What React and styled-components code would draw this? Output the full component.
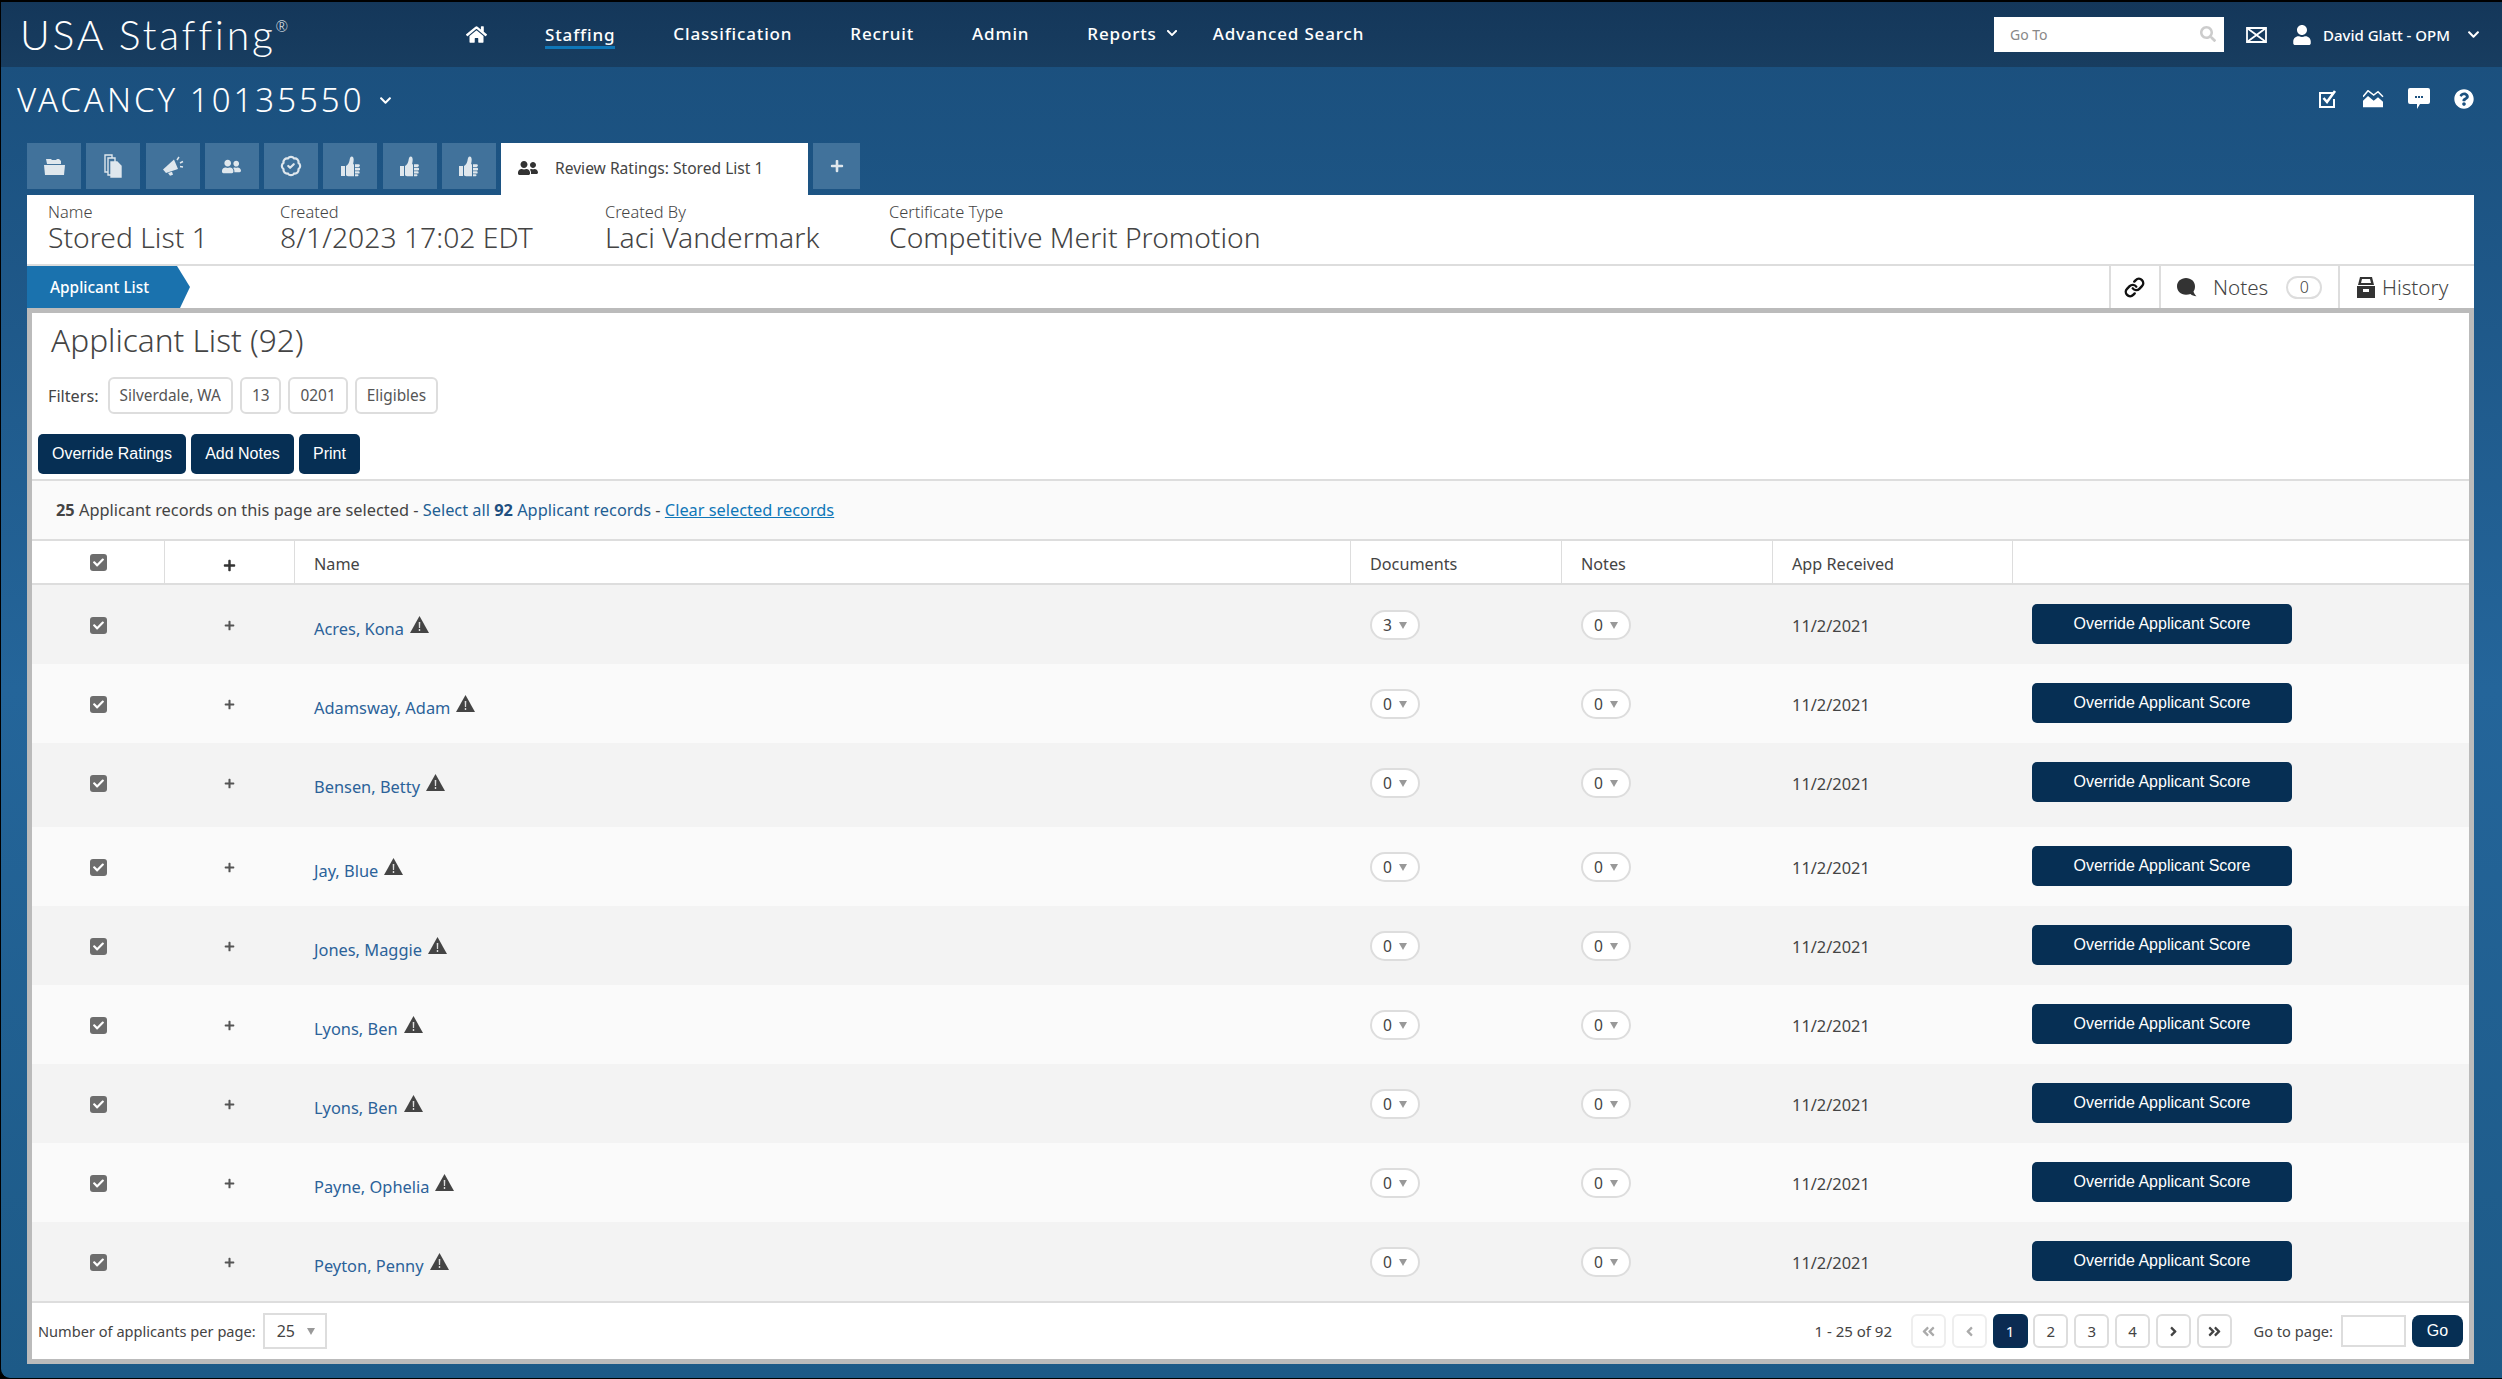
import styled, { createGlobalStyle } from "styled-components"
import {
  FaHome, FaChevronDown, FaSearch, FaUser, FaPlus, FaUserFriends,
  FaQuestionCircle, FaAngleDoubleLeft, FaAngleDoubleRight,
  FaAngleLeft, FaAngleRight, FaCheck,
} from "react-icons/fa"
import { BadgeCheck, Link } from "lucide-react"

const UI = `"Noto Sans", "Open Sans", sans-serif`
const NAVY = "#062f54"

const GlobalStyle = createGlobalStyle`
  html, body {
    margin: 0;
    background: #000;
  }
  * {
    box-sizing: border-box;
  }
  body {
    font-family: ${UI};
    color: #444;
  }
`

const Page = styled.div`
  width: 2502px;
  height: 1379px;
  display: flex;
  flex-direction: column;
  overflow: hidden;
  border-top: 2px solid #000;
  border-left: 1px solid #000;
  border-bottom: 1px solid #000;
  border-bottom-left-radius: 10px;
  background: linear-gradient(#1b507e 60px, #24659a 50%, #1d5a87);
`

const TopBar = styled.header`
  height: 65px;
  flex: none;
  display: flex;
  align-items: center;
  padding: 0 22px 0 19px;
  color: #fff;
  background: linear-gradient(#14375a, #183d60);
`

const Logo = styled.div`
  width: 446px;
  font-family: Lato, ${UI};
  font-weight: 300;
  font-size: 41px;
  letter-spacing: 2.7px;
  line-height: 1;
  sup {
    font-size: 15px;
    vertical-align: 18px;
    line-height: 0;
    letter-spacing: 0;
  }
`

const Nav = styled.nav`
  display: flex;
  align-items: center;
  gap: 58px;
`

const NavLink = styled.a`
  display: flex;
  align-items: center;
  gap: 9px;
  height: 26px;
  font-size: 17px;
  font-weight: 500;
  letter-spacing: 0.85px;
  border-bottom: 3px solid ${(p) => (p.$active ? "#0f77b8" : "transparent")};
  margin-right: ${(p) => (p.$tight ? "-23px" : "0")};
  margin-top: ${(p) => (p.$active ? "2px" : "0")};
`

const TopRight = styled.div`
  margin-left: auto;
  display: flex;
  align-items: center;
`

const GoTo = styled.div`
  width: 230px;
  height: 35px;
  display: flex;
  align-items: center;
  justify-content: space-between;
  padding: 0 8px 0 16px;
  margin-top: -1px;
  background: #fff;
  color: #888;
  font-size: 14px;
`

const TopIcon = styled.span`
  display: flex;
  margin-left: ${(p) => p.$left}px;
`

const UserName = styled.span`
  font-size: 15px;
  font-weight: 500;
  margin: 0 17px 0 11px;
`

const VacancyBar = styled.div`
  height: 76px;
  flex: none;
  display: flex;
  align-items: flex-start;
  justify-content: space-between;
  padding: 13px 28px 0 16px;
  color: #fff;
`

const VacancyTitle = styled.h1`
  margin: 0;
  display: flex;
  align-items: center;
  gap: 14px;
  font-size: 33px;
  font-weight: 300;
  line-height: 40px;
  letter-spacing: 3px;
`

const IconRow = styled.div`
  display: flex;
  align-items: center;
  gap: 24px;
  padding-top: 8px;
`

const Tabs = styled.div`
  height: 52px;
  flex: none;
  display: flex;
  align-items: flex-start;
  gap: 5.25px;
  padding-left: 26px;
`

const Tab = styled.div`
  width: ${(p) => p.$width || 54}px;
  height: 46px;
  display: flex;
  align-items: center;
  justify-content: center;
  background: #41729b;
  color: #dfe7ed;
  font-size: 19px;
`

const ActiveTab = styled.div`
  width: 307px;
  height: 52px;
  display: flex;
  align-items: center;
  gap: 17px;
  padding: 0 0 2px 17px;
  background: #fff;
  color: #444;
  font-size: 15.6px;
`

const Content = styled.div`
  flex: 1;
  min-height: 0;
  display: flex;
  flex-direction: column;
  margin: 0 28px 14px 26px;
`

const InfoRow = styled.div`
  height: 69px;
  flex: none;
  display: grid;
  grid-template-columns: 232px 325px 284px 1fr;
  padding: 8px 0 0 21px;
  background: #fff;
`

const InfoLabel = styled.div`
  font-size: 16.4px;
  font-weight: 300;
  line-height: 18px;
`

const InfoValue = styled.div`
  margin-top: -1px;
  font-size: 28.3px;
  font-weight: 300;
  line-height: 34px;
  color: #444;
`

const SubBar = styled.div`
  height: 44px;
  flex: none;
  display: flex;
  justify-content: space-between;
  border-top: 2px solid #ddd;
  background: #fff;
`

const Crumb = styled.div`
  width: 163px;
  display: flex;
  align-items: center;
  padding-left: 23px;
  background: #1a72ae;
  color: #fff;
  font-size: 15.4px;
  font-weight: 500;
  clip-path: polygon(0 0, 150px 0, 100% 50%, 153px 100%, 0 100%);
`

const SubActions = styled.div`
  display: flex;
`

const SubAction = styled.div`
  width: ${(p) => p.$width}px;
  display: flex;
  align-items: center;
  gap: ${(p) => p.$gap || 0}px;
  padding-left: ${(p) => p.$pad || 0}px;
  border-left: 2px solid #ddd;
  font-size: 20.6px;
  font-weight: 300;
  color: #444;
`

const CountPill = styled.span`
  width: 36px;
  height: 23px;
  display: flex;
  align-items: center;
  justify-content: center;
  margin-left: 2px;
  border: 2px solid #ddd;
  border-radius: 12px;
  font-size: 16px;
`

const Panel = styled.main`
  flex: 1;
  min-height: 0;
  display: flex;
  flex-direction: column;
  border: 5px solid #bbb;
  background: #fff;
`

const PanelHead = styled.div`
  flex: none;
  padding: 0 0 5px 6px;
`

const Heading = styled.h2`
  margin: 0 0 10px 13px;
  font-size: 31.6px;
  font-weight: 300;
  line-height: 54px;
  color: #444;
`

const FilterRow = styled.div`
  height: 37px;
  display: flex;
  align-items: center;
  gap: 7px;
  margin-left: 10px;
  font-size: 16.2px;
`

const FilterLabel = styled.span`
  margin-right: 2px;
`

const Chip = styled.span`
  height: 37px;
  padding: 0 10px;
  display: flex;
  align-items: center;
  border: 2px solid #ddd;
  border-radius: 6px;
  font-size: 15.4px;
  color: #555;
`

const ActionRow = styled.div`
  display: flex;
  gap: 5px;
  margin-top: 20px;
`

const DarkButton = styled.button`
  width: ${(p) => p.$width}px;
  height: ${(p) => p.$height || 40}px;
  padding: 0;
  border: 0;
  border-radius: ${(p) => p.$radius || 5}px;
  background: ${NAVY};
  color: #fff;
  font-family: "Liberation Sans", Arial, sans-serif;
  font-size: 16px;
`

const SelectionBar = styled.div`
  height: 62px;
  flex: none;
  display: flex;
  align-items: center;
  padding-left: 24px;
  border-top: 2px solid #ddd;
  border-bottom: 2px solid #ddd;
  background: #fafafa;
  font-size: 16.35px;
  white-space: pre;
  strong {
    font-weight: 700;
  }
`

const Blue = styled.span`
  color: #1f5f94;
`

const BlueStrong = styled.strong`
  color: #1f4f80;
`

const ClearLink = styled.a`
  color: #0f77b8;
  text-decoration: underline;
`

const COLUMNS = "132px 130px 1056px 211px 211px 240px 1fr"

const HeaderRow = styled.div`
  height: 44px;
  flex: none;
  display: grid;
  grid-template-columns: ${COLUMNS};
  border-bottom: 2px solid #ddd;
  font-size: 16.2px;
`

const HeaderCell = styled.div`
  display: flex;
  align-items: center;
  justify-content: ${(p) => (p.$center ? "center" : "flex-start")};
  padding: ${(p) => (p.$center ? "0" : "4px 0 0 19px")};
  border-left: ${(p) => (p.$first ? "0" : "1px solid #ddd")};
`

const HeaderPlus = styled(FaPlus)`
  margin-top: 6px;
  font-size: 13px;
  color: #333;
`

const Row = styled.div`
  height: ${(p) => p.$height}px;
  flex: none;
  display: grid;
  grid-template-columns: ${COLUMNS};
  align-items: start;
  padding-top: 19px;
  background: ${(p) => (p.$odd ? "#f3f3f3" : "#fafafa")};
  font-size: 16.4px;
`

const Cell = styled.div`
  height: 40px;
  display: flex;
  align-items: center;
  justify-content: ${(p) => (p.$center ? "center" : "flex-start")};
  padding: 2px 0 0 ${(p) => (p.$center ? 0 : 20)}px;
`

const ButtonCell = styled(Cell)`
  padding: 0 0 0 20px;
`

const Check = styled.span`
  width: 17px;
  height: 17px;
  display: flex;
  align-items: center;
  justify-content: center;
  border-radius: 3px;
  background: #6d6d6d;
  color: #fff;
  font-size: 11px;
`

const ApplicantName = styled.a`
  padding-top: 6px;
  color: #2b6299;
`

const WarnMark = styled.svg`
  margin: 0 0 2px 6px;
`

const CountSelect = styled.span`
  width: 50px;
  height: 30px;
  display: flex;
  align-items: center;
  justify-content: center;
  gap: 7px;
  border: 2px solid #ddd;
  border-radius: 15px;
  background: #fff;
  font-size: 15.6px;
`

const Caret = styled.span`
  width: 0;
  height: 0;
  border-left: 4px solid transparent;
  border-right: 4px solid transparent;
  border-top: 7px solid #999;
`

const Footer = styled.footer`
  flex: 1;
  display: flex;
  align-items: center;
  justify-content: space-between;
  padding: 0 6px;
  border-top: 2px solid #ddd;
  font-size: 14.6px;
`

const FooterGroup = styled.div`
  display: flex;
  align-items: center;
`

const RangeText = styled.span`
  font-size: 15px;
`

const PerPage = styled.span`
  width: 64px;
  height: 36px;
  display: flex;
  align-items: center;
  justify-content: space-between;
  margin-left: 7px;
  padding: 0 10px 0 12px;
  border: 2px solid #ddd;
  font-size: 16px;
`

const Pager = styled.div`
  display: flex;
  gap: 5.8px;
  margin: 0 22px 0 19px;
`

const PageButton = styled.span`
  width: 35px;
  height: 34px;
  display: flex;
  align-items: center;
  justify-content: center;
  border: 2px solid ${(p) => (p.$current ? NAVY : p.$disabled ? "#eee" : "#ddd")};
  border-radius: 6px;
  background: ${(p) => (p.$current ? "#0b2b52" : "#fff")};
  color: ${(p) => (p.$current ? "#fff" : p.$disabled ? "#aaa" : "#444")};
  font-size: 15px;
`

const PageInput = styled.span`
  width: 65px;
  height: 32px;
  margin: 0 6px 0 8px;
  border: 2px solid #ddd;
`

const FolderIcon = () => (
  <svg width="21" height="18" viewBox="0 0 21 18" fill="currentColor">
    <path d="M2 2h5l1 1h4l1-1h2l2 2v3H3z" />
    <path d="M0 8h21l-1 10H1z" />
  </svg>
)

const FilesIcon = () => (
  <svg width="20" height="24" viewBox="0 0 20 24" fill="none" stroke="currentColor" strokeWidth="1.4">
    <path d="M2 1h7v17H2z" />
    <path d="M5 4h7v17H5z" fill="#41729b" />
    <path d="M8 8h6l4 4v11H8z" fill="currentColor" />
  </svg>
)

const HornIcon = () => (
  <svg width="22" height="22" viewBox="0 0 22 22" fill="currentColor">
    <path d="M1 14.500L12 4.500l4 9.500-12 4z" />
    <path d="M6 18l4-1.300 1 3-3 1z" />
    <path d="M15 5l2-3M18 8l3-1.500M18 11.500l3 .5" stroke="currentColor" strokeWidth="1.500" fill="none" />
  </svg>
)

const ThumbIcon = () => (
  <svg width="19" height="21" viewBox="0 0 19 21" fill="currentColor">
    <path d="M0 10h4v10H0z" />
    <path d="M5 10c2-1 3-3 3.500-5.500C8.800 3 9 .5 10.500.5c1.800 0 2.500 2 2.100 4.500l-.5 3.200H13v12H7c-1 0-2-.5-2-1.200z" />
    <path d="M14 8.200h3.500a1.300 1.300 0 0 1 0 2.800H14zM14 11.800h4a1.300 1.300 0 0 1 0 2.600h-4zM14 15.200h3.500a1.200 1.200 0 0 1 0 2.400H14zM14 18.200h2.500a1 1 0 0 1 0 2H14z" />
  </svg>
)

const MailIcon = () => (
  <svg width="21" height="16" viewBox="0 0 21 16" fill="none" stroke="#fff" strokeWidth="1.8">
    <path d="M1 1h19v14H1z" />
    <path d="M1 1l19 14M20 1L1 15" />
  </svg>
)

const TaskIcon = () => (
  <svg width="21" height="18" viewBox="0 0 21 18" fill="none" stroke="#fff" strokeWidth="2">
    <path d="M16 9v8H2V3h13" />
    <path d="M5.500 8l3.500 4 8-11" strokeWidth="2.600" />
  </svg>
)

const OpenMailIcon = () => (
  <svg width="21" height="18" viewBox="0 0 21 18" fill="#fff">
    <path d="M0 10.700L5 6l5.700 4.700L15 7.300l5 4.400v5.600H0z" />
    <path d="M0 6.700L5 .7 10.700 5 15 1.700l5 5" fill="none" stroke="#fff" strokeWidth="1.500" />
  </svg>
)

const ChatIcon = () => (
  <svg width="22" height="21" viewBox="0 0 22 21">
    <path d="M2 0h18a2 2 0 0 1 2 2v12a2 2 0 0 1-2 2h-8l-3 5v-5H2a2 2 0 0 1-2-2V2a2 2 0 0 1 2-2z" fill="#fff" />
    <path d="M7 8h2v2H7zM10 8h2v2h-2zM13 8h2v2h-2z" fill="#1c5280" />
  </svg>
)

const BubbleIcon = () => (
  <svg width="21" height="21" viewBox="0 0 21 21" fill="#333">
    <path d="M10 1c5 0 9 3.600 9 8.200 0 2.300-.7 4.300-1.500 5.300.4 1.800 1.600 3.500 3 4.700-2.600 0-4.600-.8-6-2.100-1.300.4-2.900.6-4.500.6C4.500 17.700 1 14 1 9.200 1 4.600 5 1 10 1z" />
  </svg>
)

const DrawerIcon = () => (
  <svg width="18" height="23" viewBox="0 0 18 23" fill="#333">
    <path d="M3 1h12l2 8H1zM5 3l-1 4h10l-1-4z" fillRule="evenodd" />
    <path d="M0 10h18v12H0zM6 13v3h6v-3z" fillRule="evenodd" />
  </svg>
)

const WarnIcon = () => (
  <WarnMark width="19" height="17" viewBox="0 0 19 17">
    <path d="M9.500 0L19 17H0z" fill="#444" />
    <path d="M8.700 6h1.600l-.2 6H8.900zM8.800 13h1.400v2H8.800z" fill="#ddd" />
  </WarnMark>
)

const tabIcons = [
  <FolderIcon />,
  <FilesIcon />,
  <HornIcon />,
  <FaUserFriends />,
  <BadgeCheck size={22} strokeWidth={2.4} />,
  <ThumbIcon />,
  <ThumbIcon />,
  <ThumbIcon />,
]

const applicants = [
  { name: "Acres, Kona", docs: 3, height: 79 },
  { name: "Adamsway, Adam", docs: 0, height: 79 },
  { name: "Bensen, Betty", docs: 0, height: 84 },
  { name: "Jay, Blue", docs: 0, height: 79 },
  { name: "Jones, Maggie", docs: 0, height: 79 },
  { name: "Lyons, Ben", docs: 0, height: 79 },
  { name: "Lyons, Ben", docs: 0, height: 79 },
  { name: "Payne, Ophelia", docs: 0, height: 79 },
  { name: "Peyton, Penny", docs: 0, height: 79 },
]

const App = () => {
  return (
    <Page>
      <GlobalStyle />
      <TopBar>
        <Logo>USA Staffing<sup>®</sup></Logo>
        <Nav>
          <FaHome size={21} />
          <NavLink $active>Staffing</NavLink>
          <NavLink>Classification</NavLink>
          <NavLink>Recruit</NavLink>
          <NavLink>Admin</NavLink>
          <NavLink $tight>Reports <FaChevronDown size={12} /></NavLink>
          <NavLink>Advanced Search</NavLink>
        </Nav>
        <TopRight>
          <GoTo>Go To <FaSearch size={16} color="#ccc" /></GoTo>
          <TopIcon $left={22}><MailIcon /></TopIcon>
          <TopIcon $left={25}><FaUser size={20} /></TopIcon>
          <UserName>David Glatt - OPM</UserName>
          <FaChevronDown size={13} />
        </TopRight>
      </TopBar>

      <VacancyBar>
        <VacancyTitle>VACANCY 10135550 <FaChevronDown size={13} /></VacancyTitle>
        <IconRow>
          <TaskIcon />
          <OpenMailIcon />
          <ChatIcon />
          <FaQuestionCircle size={20} />
        </IconRow>
      </VacancyBar>

      <Tabs>
        {tabIcons.map((icon, i) => (
          <Tab key={i}>{icon}</Tab>
        ))}
        <ActiveTab><FaUserFriends size={20} color="#333" /> Review Ratings: Stored List 1</ActiveTab>
        <Tab $width={47}><FaPlus size={14} /></Tab>
      </Tabs>

      <Content>
        <InfoRow>
          <div><InfoLabel>Name</InfoLabel><InfoValue>Stored List 1</InfoValue></div>
          <div><InfoLabel>Created</InfoLabel><InfoValue>8/1/2023 17:02 EDT</InfoValue></div>
          <div><InfoLabel>Created By</InfoLabel><InfoValue>Laci Vandermark</InfoValue></div>
          <div><InfoLabel>Certificate Type</InfoLabel><InfoValue>Competitive Merit Promotion</InfoValue></div>
        </InfoRow>

        <SubBar>
          <Crumb>Applicant List</Crumb>
          <SubActions>
            <SubAction $width={50} $pad={13}><Link size={21} color="#111" strokeWidth={2.8} /></SubAction>
            <SubAction $width={179} $pad={15} $gap={16}><BubbleIcon /> Notes <CountPill>0</CountPill></SubAction>
            <SubAction $width={136} $pad={17} $gap={7}><DrawerIcon /> History</SubAction>
          </SubActions>
        </SubBar>

        <Panel>
          <PanelHead>
            <Heading>Applicant List (92)</Heading>
            <FilterRow>
              <FilterLabel>Filters:</FilterLabel>
              <Chip>Silverdale, WA</Chip>
              <Chip>13</Chip>
              <Chip>0201</Chip>
              <Chip>Eligibles</Chip>
            </FilterRow>
            <ActionRow>
              <DarkButton $width={148}>Override Ratings</DarkButton>
              <DarkButton $width={103}>Add Notes</DarkButton>
              <DarkButton $width={61}>Print</DarkButton>
            </ActionRow>
          </PanelHead>

          <SelectionBar>
            <strong>25</strong> Applicant records on this page are selected - <Blue>Select all </Blue><BlueStrong>92</BlueStrong><Blue> Applicant records</Blue> - <ClearLink>Clear selected records</ClearLink>
          </SelectionBar>

          <HeaderRow>
            <HeaderCell $center $first><Check><FaCheck /></Check></HeaderCell>
            <HeaderCell $center><HeaderPlus /></HeaderCell>
            <HeaderCell>Name</HeaderCell>
            <HeaderCell>Documents</HeaderCell>
            <HeaderCell>Notes</HeaderCell>
            <HeaderCell>App Received</HeaderCell>
            <HeaderCell />
          </HeaderRow>

          {applicants.map((a, i) => (
            <Row key={i} $odd={i % 2 === 0} $height={a.height}>
              <Cell $center><Check><FaCheck /></Check></Cell>
              <Cell $center><FaPlus size={11} color="#555" /></Cell>
              <Cell>
                <ApplicantName>{a.name}</ApplicantName>
                <WarnIcon />
              </Cell>
              <Cell><CountSelect>{a.docs} <Caret /></CountSelect></Cell>
              <Cell><CountSelect>0 <Caret /></CountSelect></Cell>
              <Cell>11/2/2021</Cell>
              <ButtonCell><DarkButton $width={260}>Override Applicant Score</DarkButton></ButtonCell>
            </Row>
          ))}

          <Footer>
            <FooterGroup>
              Number of applicants per page:
              <PerPage>25 <Caret /></PerPage>
            </FooterGroup>
            <FooterGroup>
              <RangeText>1 - 25 of 92</RangeText>
              <Pager>
                <PageButton $disabled><FaAngleDoubleLeft /></PageButton>
                <PageButton $disabled><FaAngleLeft /></PageButton>
                <PageButton $current>1</PageButton>
                <PageButton>2</PageButton>
                <PageButton>3</PageButton>
                <PageButton>4</PageButton>
                <PageButton><FaAngleRight /></PageButton>
                <PageButton><FaAngleDoubleRight /></PageButton>
              </Pager>
              Go to page:
              <PageInput />
              <DarkButton $width={51} $height={32} $radius={8}>Go</DarkButton>
            </FooterGroup>
          </Footer>
        </Panel>
      </Content>
    </Page>
  )
}

export default App
